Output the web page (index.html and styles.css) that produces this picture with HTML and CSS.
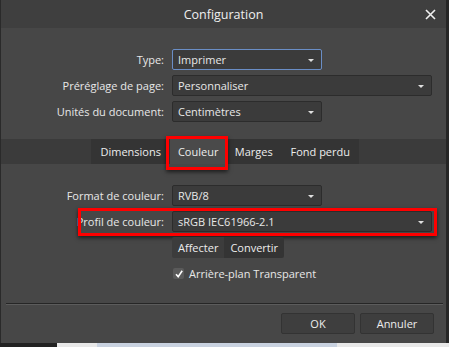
FILE: index.html
```html
<!DOCTYPE html>
<html lang="fr">
<head>
<meta charset="UTF-8">
<title>Configuration</title>
<link rel="stylesheet" href="styles.css">
</head>
<body>
<div class="dialog">
    <div class="titlebar">
        <span class="title">Configuration</span>
        <svg class="close" width="11" height="11" viewBox="0 0 11 11"><path d="M1 1L10 10M10 1L1 10" stroke="#f0f0f0" stroke-width="1.6"/></svg>
    </div>
    <div class="form">
        <div class="row">
            <label>Type:</label>
            <div class="select short focus">Imprimer<span class="arrow"></span></div>
        </div>
        <div class="row">
            <label>Préréglage de page:</label>
            <div class="select long">Personnaliser<span class="arrow"></span></div>
        </div>
        <div class="row">
            <label>Unités du document:</label>
            <div class="select short">Centimètres<span class="arrow"></span></div>
        </div>
    </div>
    <div class="tabband">
        <div class="tabs">
            <div class="tab wide">Dimensions</div>
            <div class="tab active">Couleur<span class="mark"></span></div>
            <div class="tab">Marges</div>
            <div class="tab wide">Fond perdu</div>
        </div>
    </div>
    <div class="form second">
        <div class="row">
            <label>Format de couleur:</label>
            <div class="select short">RVB/8<span class="arrow"></span></div>
        </div>
        <div class="row marked">
            <label>Profil de couleur:</label>
            <div class="select long">sRGB IEC61966-2.1<span class="arrow"></span></div>
            <span class="mark"></span>
        </div>
        <div class="row">
            <label></label>
            <div class="segmented">
                <div class="seg">Affecter</div>
                <div class="seg on">Convertir</div>
            </div>
        </div>
        <div class="row check">
            <label></label>
            <span class="box"><svg width="10" height="10" viewBox="0 0 10 10"><path d="M2 5.2L4.2 7.6L8.2 1.8" fill="none" stroke="#ffffff" stroke-width="1.6"/></svg></span>
            <span>Arrière-plan Transparent</span>
        </div>
    </div>
    <div class="separator"></div>
    <div class="footer">
        <div class="button">OK</div>
        <div class="button">Annuler</div>
    </div>
</div>
<div class="below">
    <div class="dark"></div>
    <div class="pic"></div>
</div>
</body>
</html>
```

FILE: styles.css
```css
body {
    margin: 0;
    width: 449px;
    height: 347px;
    overflow: hidden;
    background-color: #232323;
    font-family: "Open Sans", "Noto Sans", sans-serif;
    font-size: 11px;
    color: #e8e8e8;
}
.dialog {
    width: 445px;
    height: 343px;
    background-color: #474747;
    border-left: 1px solid #2a2a2a;
    border-right: 3px solid #262626;
    box-sizing: content-box;
}
.titlebar {
    height: 28px;
    background-color: #3f3f3f;
    display: flex;
    align-items: center;
    justify-content: center;
    position: relative;
}
.title {
    font-size: 12.5px;
    color: #f0f0f0;
}
.close {
    position: absolute;
    right: 10px;
    top: 9px;
}
.form {
    padding-top: 21px;
    display: flex;
    flex-direction: column;
    gap: 5px;
}
.form.second {
    padding-top: 21px;
    gap: 5px;
}
.row {
    display: flex;
    align-items: center;
    height: 21px;
    position: relative;
}
.row label {
    width: 166px;
    flex: none;
    text-align: right;
    padding-right: 3px;
    box-sizing: border-box;
}
.select {
    height: 21px;
    box-sizing: border-box;
    background-color: #3b3b3b;
    border: 1px solid #2c2c2c;
    border-radius: 2px;
    padding-left: 5px;
    display: flex;
    align-items: center;
    position: relative;
    margin-left: 5px;
}
.select.short { width: 150px; }
.select.long { width: 260px; }
.select.focus { border-color: #6a8ec6; }
.arrow {
    position: absolute;
    right: 7px;
    top: 9px;
    border-left: 3px solid transparent;
    border-right: 3px solid transparent;
    border-top: 3px solid #e0e0e0;
}
.tabband {
    margin-top: 17px;
    height: 25px;
    background-color: #3b3b3b;
    display: flex;
}
.tabs {
    margin-left: 90px;
    width: 268px;
    background-color: #343434;
    display: flex;
    align-items: center;
}
.tab {
    width: 56px;
    height: 25px;
    display: flex;
    align-items: center;
    justify-content: center;
    position: relative;
    white-space: nowrap;
    color: #ededed;
}
.tab.wide { width: 78px; }
.tab.wide:first-child { width: 80px; }
.tab.active { background-color: #4a4a4a; }
.mark {
    position: absolute;
    border: 3px solid #ff0000;
    box-shadow: 0 2px 4px rgba(0, 0, 0, 0.6);
}
.tab .mark {
    left: -4px;
    right: -2px;
    top: -3px;
    bottom: -6px;
}
.row.marked .mark {
    left: 77px;
    width: 353px;
    top: -3px;
    bottom: -4px;
}
.segmented {
    display: flex;
    margin-left: 5px;
    height: 21px;
    border-radius: 2px;
    overflow: hidden;
}
.seg {
    display: flex;
    align-items: center;
    padding: 0 6px;
    background-color: #3c3c3c;
    color: #ededed;
}
.seg.on { background-color: #343434; }
.box {
    width: 11px;
    height: 11px;
    margin-left: 6px;
    margin-right: 5px;
    background-color: #5a5a5a;
    border-radius: 2px;
    display: flex;
    align-items: center;
    justify-content: center;
}
.separator {
    margin: 19px 3px 0 5px;
    height: 1px;
    background-color: #262626;
    border-bottom: 1px solid #5c5c5c;
}
.footer {
    display: flex;
    justify-content: flex-end;
    gap: 5px;
    padding: 8px 12px 0 0;
}
.button {
    width: 74px;
    height: 21px;
    box-sizing: border-box;
    background-color: #3e3e3e;
    border: 1px solid #333333;
    border-radius: 2px;
    display: flex;
    align-items: center;
    justify-content: center;
    color: #ededed;
}
.below {
    display: flex;
    height: 4px;
}
.dark {
    width: 57px;
    background-color: #222222;
}
.pic {
    flex: 1;
    background: linear-gradient(90deg, #e8e8e8 0 40px, #c9d2e0 40px 280px, #e8e8e8 280px);
}
```
